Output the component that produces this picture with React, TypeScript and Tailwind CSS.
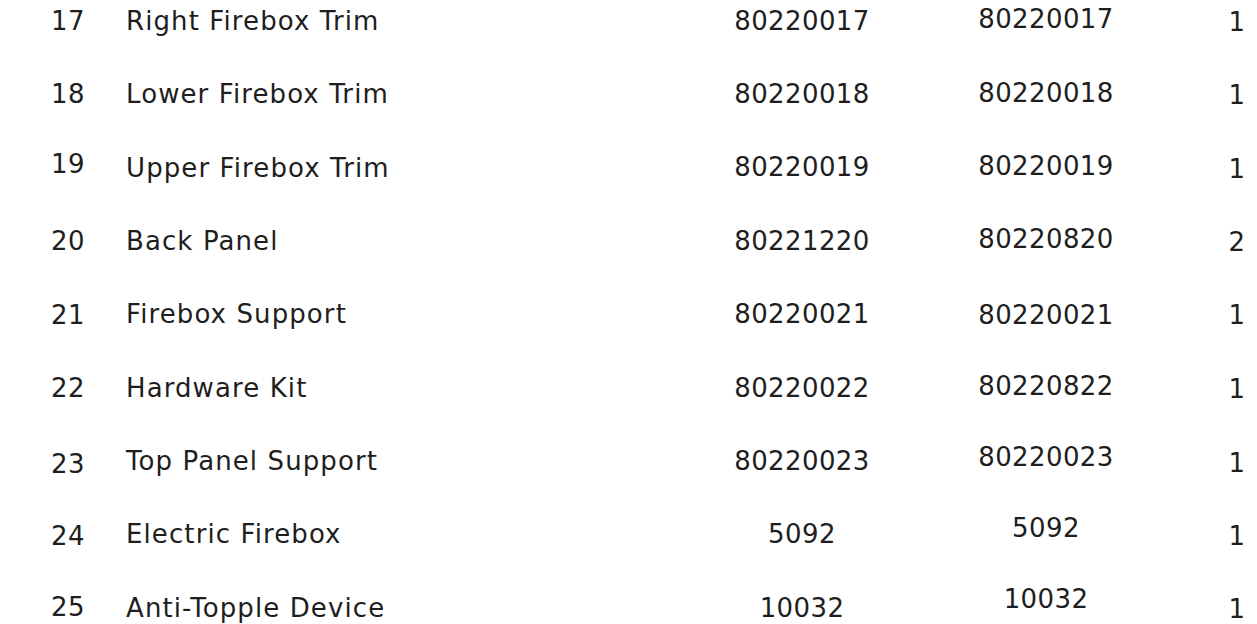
import React from "react";

type Part = {
  no: string;
  name: string;
  partA: string;
  partB: string;
  qty: string;
  // small vertical drift per cell, as in the scanned sheet
  dy: [number, number, number, number, number];
};

const parts: Part[] = [
  { no: "17", name: "Right Firebox Trim", partA: "80220017", partB: "80220017", qty: "1", dy: [0, 0, 0, -2, 1] },
  { no: "18", name: "Lower Firebox Trim", partA: "80220018", partB: "80220018", qty: "1", dy: [0, 0, 0, -1, 1] },
  { no: "19", name: "Upper Firebox Trim", partA: "80220019", partB: "80220019", qty: "1", dy: [-3, 1, 0, -1, 2] },
  { no: "20", name: "Back Panel", partA: "80221220", partB: "80220820", qty: "2", dy: [0, 0, 0, -2, 1] },
  { no: "21", name: "Firebox Support", partA: "80220021", partB: "80220021", qty: "1", dy: [1, 0, 0, 1, 1] },
  { no: "22", name: "Hardware Kit", partA: "80220022", partB: "80220822", qty: "1", dy: [0, 0, 0, -2, 1] },
  { no: "23", name: "Top Panel Support", partA: "80220023", partB: "80220023", qty: "1", dy: [3, 0, 0, -4, 2] },
  { no: "24", name: "Electric Firebox", partA: "5092", partB: "5092", qty: "1", dy: [2, 0, 0, -6, 2] },
  { no: "25", name: "Anti-Topple Device", partA: "10032", partB: "10032", qty: "1", dy: [-1, 0, 0, -9, 1] },
];

function PartRow({ part }: { part: Part }) {
  const cells = [part.no, part.name, part.partA, part.partB, part.qty];
  const widths = [
    "w-[75px] shrink-0",
    "w-[576px] shrink-0 tracking-[1.1px]",
    "w-[200px] shrink-0 text-center",
    "w-[200px] shrink-0 ml-[44px] text-center",
    "w-[40px] shrink-0 ml-[71px] text-center",
  ];
  return (
    <div className="flex items-center h-[73.4px] pl-[51px]">
      {cells.map((c, i) => (
        <div
          key={i}
          className={widths[i] + " whitespace-nowrap"}
          style={{ transform: `translateY(${part.dy[i]}px)` }}
        >
          {c}
        </div>
      ))}
    </div>
  );
}

export default function App() {
  return (
    <div className="w-[1257px] h-[624px] overflow-hidden bg-white">
      <div
        className="-mt-[16px] text-[#1e1e1e] text-[26px] leading-none font-normal tracking-[0.4px]"
        style={{ fontFamily: "'DejaVu Sans', 'Noto Sans', sans-serif" }}
      >
        {parts.map((p) => (
          <PartRow key={p.no} part={p} />
        ))}
      </div>
    </div>
  );
}
